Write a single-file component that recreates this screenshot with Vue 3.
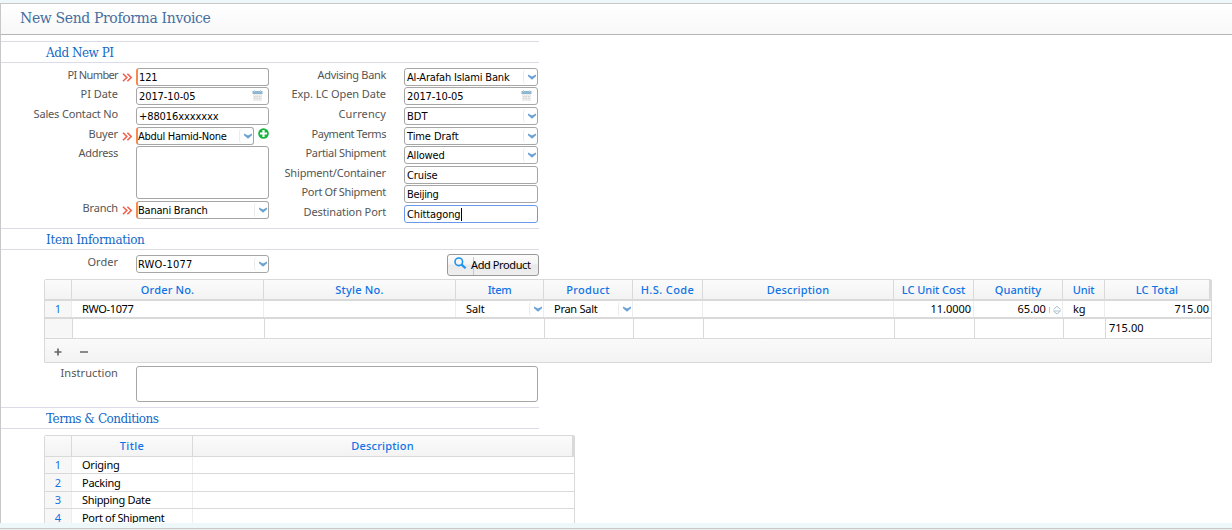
<template>
  <div class="page">
    <header class="page-title">
      <span v-fit="190">New Send Proforma Invoice</span>
    </header>

    <main class="content">
      <h2 class="section-title"><span v-fit="67">Add New PI</span></h2>

      <div class="form">
        <div v-for="(col, c) in columns" :key="c" class="form-col" :class="'col-' + c">
          <div v-for="f in col" :key="f.label" class="row" :class="f.size">
            <label class="label"><span v-fit="f.lw">{{ f.label }}</span></label>
            <span class="mark">
              <svg v-if="f.required" width="11" height="9" viewBox="0 0 11 9">
                <path d="M1 .7 4.8 4.5 1 8.3M5.4 .7 9.2 4.5 5.4 8.3" fill="none" stroke="#f4604c" stroke-width="1.6" />
              </svg>
            </span>
            <div class="box" :class="[f.type, { required: f.required, focus: f.focus, short: f.add }]">
              <span v-if="f.value" v-fit="f.vw" class="value">{{ f.value }}</span>
              <i v-if="f.focus" class="caret"></i>
              <span v-if="f.type === 'select'" class="arrow">
                <svg width="8" height="6" viewBox="0 0 8 6"><path d="M0 .4 4 2.4 8 .4V2.2L4 5.8 0 2.2Z" fill="#6aa3d3" /></svg>
              </span>
              <svg v-if="f.type === 'date'" class="calendar" width="11" height="12" viewBox="0 0 11 12">
                <path d="M1 3h9v8H1z" fill="#ececea" />
                <path d="M.5 1h10v3H.5z" fill="#8fb6d1" />
                <path d="M2 0h1v2H2zM8 0h1v2H8z" fill="#b9d1e2" />
                <path d="M2 6.5h7M2 8.5h7" stroke="#d3d3d0" stroke-dasharray="1.5 1" />
              </svg>
            </div>
            <svg v-if="f.add" class="add" width="11" height="11" viewBox="0 0 11 11">
              <circle cx="5.5" cy="5.5" r="5.3" fill="#14b53a" />
              <path d="M5.5 2v7M2 5.5h7" stroke="#fff" stroke-width="2.2" />
            </svg>
          </div>
        </div>
      </div>

      <h2 class="section-title"><span v-fit="98">Item Information</span></h2>

      <div class="order-row">
        <label class="label"><span v-fit="30">Order</span></label>
        <div class="box select">
          <span v-fit="54" class="value">RWO-1077</span>
          <span class="arrow">
            <svg width="8" height="6" viewBox="0 0 8 6"><path d="M0 .4 4 2.4 8 .4V2.2L4 5.8 0 2.2Z" fill="#6aa3d3" /></svg>
          </span>
        </div>
        <button class="add-product">
          <svg width="13" height="13" viewBox="0 0 13 13">
            <circle cx="4.8" cy="4.8" r="3.8" fill="none" stroke="#1c94ee" stroke-width="1.6" />
            <path d="M7.6 7.6 11.6 11.3" stroke="#1c94ee" stroke-width="2.2" />
          </svg>
          <span class="btn-text"><span v-fit="59">Add Product</span></span>
        </button>
      </div>

      <div class="grid items">
        <div class="tr head">
          <div v-for="(h, i) in itemHead" :key="i" class="td"><span v-if="h.text" v-fit="h.w">{{ h.text }}</span></div>
        </div>
        <div class="tr body">
          <div v-for="(d, i) in itemRow" :key="i" class="td" :class="d.cls">
            <span v-if="d.text" v-fit="d.w">{{ d.text }}</span>
            <span v-if="d.cls === 'pick'" class="arrow">
              <svg width="8" height="6" viewBox="0 0 8 6"><path d="M0 .4 4 2.4 8 .4V2.2L4 5.8 0 2.2Z" fill="#6aa3d3" /></svg>
            </span>
            <svg v-if="d.cls === 'qty'" class="spin" width="12" height="10" viewBox="0 0 12 10">
              <path d="M.5 2v6" stroke="#c8c8c8" />
              <path d="M4.5 4.3 8 1.3l3.5 3M4.5 6h7L8 9Z" fill="none" stroke="#a9bfcd" />
            </svg>
          </div>
        </div>
        <div class="tr total">
          <div v-for="n in 10" :key="n" class="td"><span v-if="n === 10" v-fit="34">715.00</span></div>
        </div>
        <div class="pager">
          <svg width="8" height="8" viewBox="0 0 8 8"><path d="M4 .5v7M.5 4h7" stroke="#666" stroke-width="1.7" /></svg>
          <svg width="8" height="8" viewBox="0 0 8 8"><path d="M0 4h8" stroke="#777" stroke-width="1.7" /></svg>
        </div>
      </div>

      <div class="instruction">
        <label class="label"><span v-fit="57">Instruction</span></label>
        <div class="box"></div>
      </div>

      <h2 class="section-title"><span v-fit="112">Terms &amp; Conditions</span></h2>

      <div class="grid terms">
        <div class="tr head">
          <div class="td"></div>
          <div class="td"><span v-fit="24">Title</span></div>
          <div class="td"><span v-fit="62">Description</span></div>
        </div>
        <div v-for="(t, i) in terms" :key="i" class="tr body">
          <div class="td num"><span>{{ i + 1 }}</span></div>
          <div class="td"><span v-fit="t.w">{{ t.text }}</span></div>
          <div class="td"></div>
        </div>
      </div>
    </main>
  </div>
</template>

<script setup>
// spreads the letters so the text takes the given width
const vFit = {
  mounted(el, { value }) {
    if (!value) return;
    const width = el.getBoundingClientRect().width;
    el.style.letterSpacing = (value + 0.5 - width) / el.textContent.length + 'px';
  },
};

const columns = [
  [
    { label: 'PI Number', lw: 50, value: '121', vw: 18, type: 'text', required: true },
    { label: 'PI Date', lw: 37, value: '2017-10-05', vw: 56, type: 'date' },
    { label: 'Sales Contact No', lw: 84, value: '+88016xxxxxxx', vw: 79, type: 'text' },
    { label: 'Buyer', lw: 29, value: 'Abdul Hamid-None', vw: 88, type: 'select', required: true, add: true },
    { label: 'Address', lw: 39, type: 'area', size: 'tall' },
    { label: 'Branch', lw: 35, value: 'Banani Branch', vw: 69, type: 'select', required: true },
  ],
  [
    { label: 'Advising Bank', lw: 68, value: 'Al-Arafah Islami Bank', vw: 102, type: 'select' },
    { label: 'Exp. LC Open Date', lw: 94, value: '2017-10-05', vw: 56, type: 'date' },
    { label: 'Currency', lw: 47, value: 'BDT', vw: 20, type: 'select' },
    { label: 'Payment Terms', lw: 74, value: 'Time Draft', vw: 51, type: 'select' },
    { label: 'Partial Shipment', lw: 80, value: 'Allowed', vw: 37, type: 'select' },
    { label: 'Shipment/Container', lw: 101, value: 'Cruise', vw: 30, type: 'text' },
    { label: 'Port Of Shipment', lw: 84, value: 'Beijing', vw: 31, type: 'text' },
    { label: 'Destination Port', lw: 82, value: 'Chittagong', vw: 53, type: 'text', focus: true },
  ],
];

const itemHead = [
  { text: '' },
  { text: 'Order No.', w: 53 },
  { text: 'Style No.', w: 48 },
  { text: 'Item', w: 23 },
  { text: 'Product', w: 43 },
  { text: 'H.S. Code', w: 53 },
  { text: 'Description', w: 62 },
  { text: 'LC Unit Cost', w: 63 },
  { text: 'Quantity', w: 46 },
  { text: 'Unit', w: 21 },
  { text: 'LC Total', w: 42 },
];

const itemRow = [
  { text: '1', cls: 'num' },
  { text: 'RWO-1077', w: 51 },
  { text: '' },
  { text: 'Salt', w: 18, cls: 'pick' },
  { text: 'Pran Salt', w: 43, cls: 'pick' },
  { text: '' },
  { text: '' },
  { text: '11.0000', w: 40, cls: 'right' },
  { text: '65.00', w: 28, cls: 'qty' },
  { text: 'kg', w: 12 },
  { text: '715.00', w: 34, cls: 'right' },
];

const terms = [
  { text: 'Origing', w: 37 },
  { text: 'Packing', w: 38 },
  { text: 'Shipping Date', w: 68 },
  { text: 'Port of Shipment', w: 82 },
];
</script>

<style>
body {
  margin: 0;
  background: #eef7f9;
}
</style>

<style scoped>
.page {
  box-sizing: border-box;
  height: 530px;
  padding-top: 3px;
  overflow: hidden;
  background: linear-gradient(#eef7f9 528px, #c8c8c8 528px, #c8c8c8 529px, #ececec 529px);
  font-family: 'Noto Sans', 'Open Sans', sans-serif;
  font-size: 11px;
  color: #000;
}

span {
  white-space: nowrap;
}

.page-title {
  box-sizing: border-box;
  height: 32px;
  padding-left: 19px;
  border-top: 1px solid #c8c8c8;
  border-bottom: 1px solid #b5b5b5;
  border-left: 1px solid #c8c8c8;
  background: linear-gradient(#fff, #f8f8f8);
  font: 14px/29px 'DejaVu Serif', serif;
  color: #456f9f;
}

.content {
  box-sizing: border-box;
  height: 488px;
  padding-top: 6px;
  overflow: hidden;
  border-left: 1px solid #c8c8c8;
  background: #fff;
}

.section-title {
  box-sizing: border-box;
  width: 538px;
  height: 22px;
  margin: 0;
  padding-left: 45px;
  border-top: 1px solid #dcdce9;
  border-bottom: 1px solid #dcdce9;
  font: 12px/22px 'DejaVu Serif', serif;
  color: #1368c8;
}

.form {
  display: flex;
  height: 165px;
}

.form-col {
  display: grid;
  box-sizing: border-box;
  width: 268px;
  padding-top: 5px;
  align-content: start;
}

.col-0 {
  grid-template-rows: 19px 20px 20px 19px 55px 18px;
}

.col-1 {
  grid-template-rows: 19px 20px 20px 19px 20px 19px 20px 18px;
}

.row {
  display: flex;
  align-items: flex-start;
}

.label {
  flex: none;
  width: 117px;
  line-height: 15px;
  text-align: right;
  color: #555;
}

.label span {
  position: relative;
  top: -1px;
}

.mark {
  flex: none;
  display: flex;
  box-sizing: border-box;
  width: 18px;
  padding: 5px 0 0 4px;
}

.box {
  box-sizing: border-box;
  flex: none;
  display: flex;
  width: 133px;
  height: 18px;
  padding-left: 2px;
  border: 1px solid #a6a6a6;
  border-radius: 3px;
  background: #fff;
  font: 11px/17px 'DejaVu Sans Condensed', 'DejaVu Sans', sans-serif;
}

.col-1 .box {
  width: 134px;
}

.box.select {
  padding-left: 1px;
}

.col-1 .box.select {
  padding-left: 2px;
}

.box.required {
  border-left: 2px solid #f58a50;
}

.box.required.text {
  padding-left: 1px;
}

.box.required.select {
  padding-left: 0;
}

.box.short {
  width: 118px;
}

.tall .box {
  height: 53px;
}

.box.focus {
  border-color: #6b97ec;
}

.caret {
  width: 1px;
  height: 13px;
  margin-top: 2px;
  background: #000;
}

.arrow {
  display: flex;
  box-sizing: border-box;
  width: 14px;
  height: 14px;
  margin: 1px 0 0 auto;
  padding: 4px 0 0 4px;
  border-left: 1px solid #ebebeb;
  border-radius: 3px 0 0 3px;
}

.calendar {
  margin: 2px 5px 0 auto;
}

.add {
  margin: 1px 0 0 4px;
}

.order-row {
  display: flex;
  box-sizing: border-box;
  height: 29px;
  padding-top: 4px;
}

.order-row .label,
.instruction .label {
  margin-right: 18px;
}

.order-row .label {
  margin-top: 1px;
}

.order-row .box {
  margin-top: 1px;
}

.add-product {
  display: flex;
  box-sizing: border-box;
  width: 92px;
  height: 22px;
  margin-left: 178px;
  padding: 2px 0 0 6px;
  border: 1px solid #999;
  border-radius: 3px;
  background: linear-gradient(#fdfdfd, #f4f4f4 45%, #e9e9e9 50%, #efefef);
  font: 11px/16px 'Noto Sans', sans-serif;
  color: #000;
}

.btn-text {
  margin-left: 4px;
  background: linear-gradient(#c8c8c8, #c8c8c8) 2px 0 / 1px 100% no-repeat;
}

.grid {
  margin-left: 43px;
}

.tr {
  display: grid;
}

.td {
  box-sizing: border-box;
  display: flex;
  min-width: 0;
  padding-left: 10px;
  overflow: hidden;
  border-right: 1px solid #ededed;
}

.head {
  background: linear-gradient(#fbfbfb, #f3f3f3);
  font-weight: 500;
  color: #0f73e6;
}

.head .td {
  justify-content: center;
  padding: 0;
  border-color: #d9d9d9;
}

.head .td:last-child {
  border-right-width: 2px;
}

.num {
  justify-content: center;
  padding: 0;
  background: #f7f7f7;
  color: #0f73e6;
}

.items {
  box-sizing: border-box;
  width: 1168px;
  height: 84px;
  border: 1px solid #d9d9d9;
  border-radius: 2px 2px 0 0;
}

.items .tr {
  grid-template-columns: 27px 192px 192px 88px 89px 70px 191px 80px 89px 42px 106px;
}

.items .head {
  height: 21px;
  border-bottom: 2px solid #d9d9d9;
  box-sizing: border-box;
  line-height: 20px;
}

.items .body {
  box-sizing: border-box;
  height: 18px;
  border-bottom: 2px solid #d9d9d9;
  line-height: 16px;
}

.items .right {
  justify-content: flex-end;
  padding-right: 2px;
}

.items .qty {
  justify-content: flex-end;
  padding-right: 1px;
}

.spin {
  margin: 4px 0 0 3px;
}

.items .body .td:last-child {
  border: 0;
}

.items .total {
  box-sizing: border-box;
  grid-template-columns: 28px 192px 280px 89px 70px 191px 80px 89px 42px 105px;
  height: 20px;
  border-bottom: 1px solid #d9d9d9;
  line-height: 18px;
}

.total .td {
  padding-left: 3px;
  border-color: #d9d9d9;
}

.total .td:first-child {
  background: #f7f7f7;
}

.total .td:last-child {
  border: 0;
}

.pager {
  display: flex;
  gap: 18px;
  box-sizing: border-box;
  height: 23px;
  padding: 9px 0 0 9px;
  background: linear-gradient(#fafafa, #f3f3f3);
}

.instruction {
  display: flex;
  height: 44px;
}

.instruction .label {
  margin-top: 3px;
}

.instruction .box {
  width: 402px;
  height: 36px;
  margin-top: 3px;
}

.terms {
  box-sizing: border-box;
  width: 531px;
  margin-top: 6px;
  border: 1px solid #d9d9d9;
  border-radius: 2px 2px 0 0;
}

.terms .tr {
  box-sizing: border-box;
  grid-template-columns: 27px 121px 381px;
  height: 17px;
  border-bottom: 1px solid #d9d9d9;
  line-height: 16px;
}

.terms .head {
  height: 21px;
  line-height: 20px;
}

.terms .tr:nth-child(3),
.terms .tr:nth-child(5) {
  height: 18px;
  line-height: 17px;
}

.terms .body .td:last-child {
  border: 0;
}
</style>
